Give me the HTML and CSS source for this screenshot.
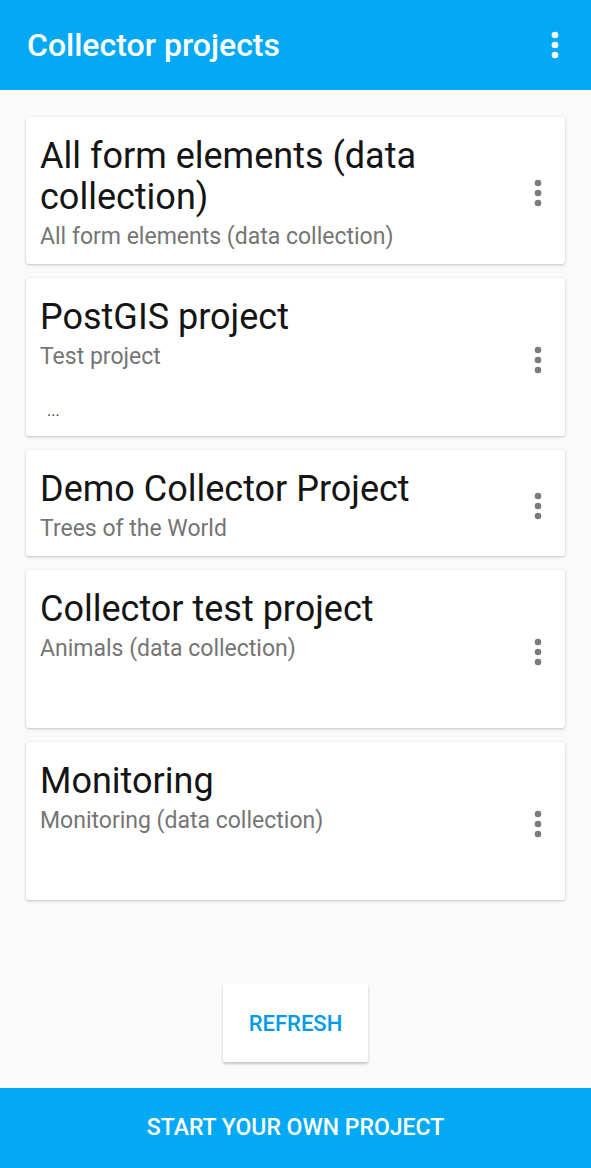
FILE: index.html
```html
<!DOCTYPE html>
<html lang="en">
<head>
<meta charset="utf-8">
<title>Collector projects</title>
<link rel="stylesheet" href="styles.css">
</head>
<body>
<div class="app">
  <header class="appbar">
    <h1 class="appbar-title">Collector projects</h1>
    <svg class="more more-light" viewBox="0 0 24 24" aria-hidden="true"><circle cx="12" cy="6" r="2"/><circle cx="12" cy="12" r="2"/><circle cx="12" cy="18" r="2"/></svg>
  </header>
  <main class="content">
    <ul class="cards">
      <li class="card">
        <div class="card-text">
          <div class="card-title">All form elements (data collection)</div>
          <div class="card-sub">All form elements (data collection)</div>
        </div>
        <svg class="more" viewBox="0 0 24 24" aria-hidden="true"><circle cx="12" cy="6" r="2"/><circle cx="12" cy="12" r="2"/><circle cx="12" cy="18" r="2"/></svg>
      </li>
      <li class="card">
        <div class="card-text">
          <div class="card-title">PostGIS project</div>
          <div class="card-sub">Test project</div>
          <div class="card-desc"><span>...</span></div>
        </div>
        <svg class="more" viewBox="0 0 24 24" aria-hidden="true"><circle cx="12" cy="6" r="2"/><circle cx="12" cy="12" r="2"/><circle cx="12" cy="18" r="2"/></svg>
      </li>
      <li class="card">
        <div class="card-text">
          <div class="card-title">Demo Collector Project</div>
          <div class="card-sub">Trees of the World</div>
        </div>
        <svg class="more" viewBox="0 0 24 24" aria-hidden="true"><circle cx="12" cy="6" r="2"/><circle cx="12" cy="12" r="2"/><circle cx="12" cy="18" r="2"/></svg>
      </li>
      <li class="card">
        <div class="card-text">
          <div class="card-title">Collector test project</div>
          <div class="card-sub">Animals (data collection)</div>
          <div class="card-desc"></div>
        </div>
        <svg class="more" viewBox="0 0 24 24" aria-hidden="true"><circle cx="12" cy="6" r="2"/><circle cx="12" cy="12" r="2"/><circle cx="12" cy="18" r="2"/></svg>
      </li>
      <li class="card">
        <div class="card-text">
          <div class="card-title">Monitoring</div>
          <div class="card-sub">Monitoring (data collection)</div>
          <div class="card-desc"></div>
        </div>
        <svg class="more" viewBox="0 0 24 24" aria-hidden="true"><circle cx="12" cy="6" r="2"/><circle cx="12" cy="12" r="2"/><circle cx="12" cy="18" r="2"/></svg>
      </li>
    </ul>
    <div class="refresh-wrap">
      <button class="refresh" type="button">REFRESH</button>
    </div>
  </main>
  <footer class="bottombar">START YOUR OWN PROJECT</footer>
</div>
</body>
</html>
```

FILE: styles.css
```css
* { box-sizing: border-box; }
html, body {
  margin: 0;
  padding: 0;
  background: #fafafa;
  font-family: Roboto, "Liberation Sans", Arial, sans-serif;
}
.app {
  display: flex;
  flex-direction: column;
  height: 1168px;
}
.appbar {
  height: 90px;
  flex: 0 0 90px;
  background: #03a9f4;
  display: flex;
  align-items: center;
  justify-content: space-between;
  padding: 0 16px 0 27px;
}
.appbar-title {
  margin: 0;
  color: #fff;
  font-size: 32px;
  line-height: 38px;
  font-weight: 500;
  letter-spacing: 0;
  padding-bottom: 1px;
}
.more {
  width: 40px;
  height: 40px;
  flex: 0 0 40px;
  fill: #7b7b7b;
}
.more-light { fill: #fff; }
.content {
  flex: 1;
  display: flex;
  flex-direction: column;
  padding: 27px 26px 26px;
}
.cards {
  list-style: none;
  margin: 0;
  padding: 0;
  display: flex;
  flex-direction: column;
  gap: 14px;
}
.card {
  background: #fff;
  border-radius: 3px;
  box-shadow: 0 1px 3px rgba(0,0,0,0.22), 0 0 1px rgba(0,0,0,0.08);
  display: flex;
  align-items: center;
  padding: 19px 7px 14px 14px;
}
.card-text {
  flex: 1;
  min-width: 0;
}
.card-title {
  font-size: 36px;
  line-height: 41px;
  color: #141414;
  padding-right: 50px;
}
.card-sub {
  margin-top: 5px;
  font-size: 23px;
  line-height: 27px;
  color: #757575;
}
.card-desc {
  height: 52px;
  display: flex;
  align-items: flex-end;
  padding: 0 0 2px 7px;
  font-size: 16px;
  line-height: 19px;
  color: #444;
}
.refresh-wrap {
  margin-top: auto;
  display: flex;
  justify-content: center;
}
.refresh {
  width: 145px;
  height: 78px;
  border: 0;
  border-radius: 2px;
  background: #fff;
  box-shadow: 0 2px 3px rgba(0,0,0,0.22);
  color: #039be5;
  font-family: Roboto, "Liberation Sans", Arial, sans-serif;
  font-size: 22px;
  font-weight: 500;
  padding: 0;
}
.bottombar {
  flex: 0 0 80px;
  height: 80px;
  background: #03a9f4;
  color: #fff;
  font-size: 23px;
  font-weight: 500;
  display: flex;
  align-items: center;
  justify-content: center;
  padding-bottom: 2px;
}
```
